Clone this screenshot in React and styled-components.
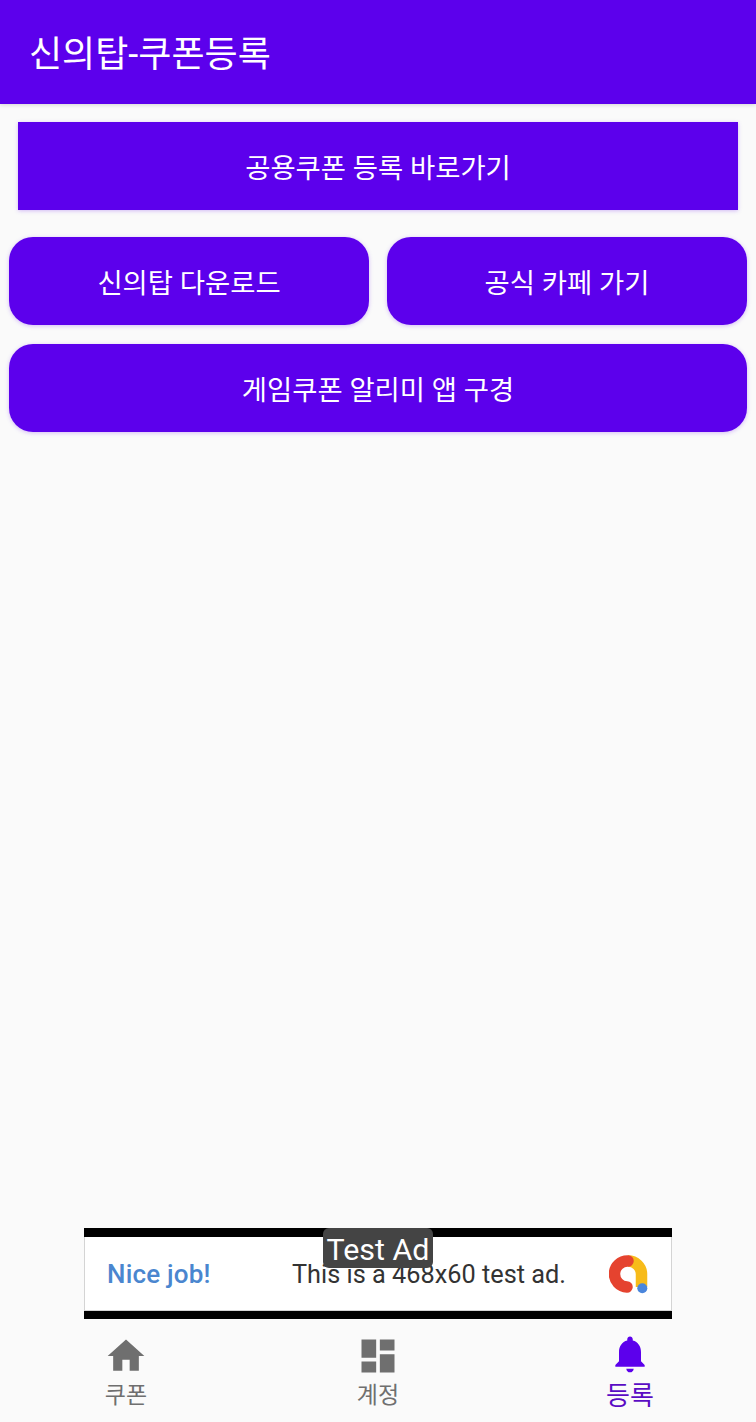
import React from 'react'
import styled, { createGlobalStyle } from 'styled-components'

const PURPLE = '#5c00ec'
const FONT = `Roboto, "Noto Sans CJK KR", sans-serif`

const GlobalStyle = createGlobalStyle`
  html, body {
    margin: 0;
    padding: 0;
    background: #fafafa;
  }
  * {
    box-sizing: border-box;
  }
`

const App = () => {
  return (
    <Page>
      <GlobalStyle />
      <Header>
        <Title>신의탑-쿠폰등록</Title>
      </Header>
      <Content>
        <SquareButton>공용쿠폰 등록 바로가기</SquareButton>
        <ButtonRow>
          <RoundButton>신의탑 다운로드</RoundButton>
          <RoundButton>공식 카페 가기</RoundButton>
        </ButtonRow>
        <WideRow>
          <RoundButton>게임쿠폰 알리미 앱 구경</RoundButton>
        </WideRow>
      </Content>
      <AdBanner>
        <AdBadge>Test Ad</AdBadge>
        <AdBody>
          <AdHeadline>Nice job!</AdHeadline>
          <AdMessage>This is a 468x60 test ad.</AdMessage>
          <AdLogo />
        </AdBody>
      </AdBanner>
      <BottomNav>
        <NavItem>
          <NavIcon viewBox="0 0 24 24">
            <path d="M10 20v-6h4v6h5v-8h3L12 3 2 12h3v8z" />
          </NavIcon>
          <NavLabel>쿠폰</NavLabel>
        </NavItem>
        <NavItem>
          <NavIcon viewBox="0 0 24 24">
            <path d="M3 13h8V3H3v10zm0 8h8v-6H3v6zm10 0h8V11h-8v10zm0-18v6h8V3h-8z" />
          </NavIcon>
          <NavLabel>계정</NavLabel>
        </NavItem>
        <NavItem active>
          <NavIcon active viewBox="0 0 24 24">
            <path d="M12 22c1.1 0 2-.9 2-2h-4c0 1.1.89 2 2 2zm6-6v-5c0-3.07-1.64-5.64-4.5-6.32V4c0-.83-.67-1.5-1.5-1.5s-1.5.67-1.5 1.5v.68C7.63 5.36 6 7.92 6 11v5l-2 2v1h16v-1l-2-2z" />
          </NavIcon>
          <NavLabel active>등록</NavLabel>
        </NavItem>
      </BottomNav>
    </Page>
  )
}

const AdLogo = () => (
  <LogoSvg viewBox="0 0 40 40">
    <path d="M19 6A13.5 13 0 0 1 32.5 19V32" fill="none" stroke="#f7bb1a" strokeWidth="11.5" />
    <path d="M19 6A13 13 0 0 0 18 32" fill="none" stroke="#e5432f" strokeWidth="11.5" strokeLinecap="round" />
    <circle cx="33.3" cy="33.3" r="5" fill="#4a86dc" />
  </LogoSvg>
)

const Page = styled.div`
  display: flex;
  flex-direction: column;
  height: 100vh;
  background: #fafafa;
  font-family: ${FONT};
  overflow: hidden;
`
const Header = styled.header`
  display: flex;
  align-items: center;
  flex: 0 0 104px;
  padding: 0 29px 2px;
  background: ${PURPLE};
  box-shadow: 0 1px 4px rgba(0, 0, 0, 0.15);
`
const Title = styled.h1`
  margin: 0;
  color: #fff;
  font-size: 36px;
  font-weight: 400;
`
const Content = styled.main`
  display: flex;
  flex-direction: column;
  flex: 1;
  padding: 18px 9px 0;
`
const BaseButton = styled.button`
  display: flex;
  align-items: center;
  justify-content: center;
  flex: 1;
  height: 88px;
  padding: 0 0 1px;
  border: none;
  background: ${PURPLE};
  color: #fff;
  font-family: ${FONT};
  font-size: 27.4px;
  box-shadow: 0 1px 4px rgba(98, 0, 238, 0.25);
`
const SquareButton = styled(BaseButton)`
  flex: 0 0 88px;
  margin: 0 9px;
`
const RoundButton = styled(BaseButton)`
  border-radius: 24px;
`
const ButtonRow = styled.div`
  display: flex;
  gap: 18px;
  margin-top: 27px;
`
const WideRow = styled.div`
  display: flex;
  margin-top: 19px;
`
const AdBanner = styled.aside`
  position: relative;
  flex: 0 0 91px;
  align-self: center;
  width: 588px;
  border-top: 9px solid #000;
  border-bottom: 8px solid #000;
`
const AdBody = styled.div`
  display: grid;
  grid-template-columns: 185px 1fr auto;
  align-items: center;
  height: 100%;
  padding: 1px 22px 0 22px;
  background: #fff;
  border: 1px solid #d4d4d4;
  border-top: none;
`
const AdBadge = styled.span`
  position: absolute;
  z-index: 1;
  top: -9px;
  left: 239px;
  width: 110px;
  height: 40px;
  border-radius: 6px;
  background: #444;
  color: #fff;
  font-size: 30.4px;
  line-height: 43px;
  text-align: center;
`
const AdHeadline = styled.span`
  color: #4a86cf;
  font-size: 26px;
  font-weight: 500;
  letter-spacing: 0.2px;
`
const AdMessage = styled.span`
  color: #333;
  font-size: 25.3px;
  font-family: Roboto, sans-serif;
`
const LogoSvg = styled.svg`
  display: block;
  width: 40px;
  height: 40px;
  margin-top: 1px;
`
const BottomNav = styled.nav`
  display: grid;
  grid-template-columns: repeat(3, 1fr);
  flex: 0 0 103px;
  background: #fafafa;
`
const NavItem = styled.div`
  display: flex;
  flex-direction: column;
  align-items: center;
  padding-top: ${props => (props.active ? '13px' : '15px')};
`
const NavIcon = styled.svg`
  display: block;
  width: 44px;
  height: 44px;
  fill: ${props => (props.active ? PURPLE : '#6f6f6f')};
`
const NavLabel = styled.span`
  margin-top: ${props => (props.active ? '5px' : '3px')};
  color: ${props => (props.active ? '#5a0cc4' : '#6f6f6f')};
  font-size: ${props => (props.active ? '26px' : '23px')};
  line-height: 30px;
`

export default App
